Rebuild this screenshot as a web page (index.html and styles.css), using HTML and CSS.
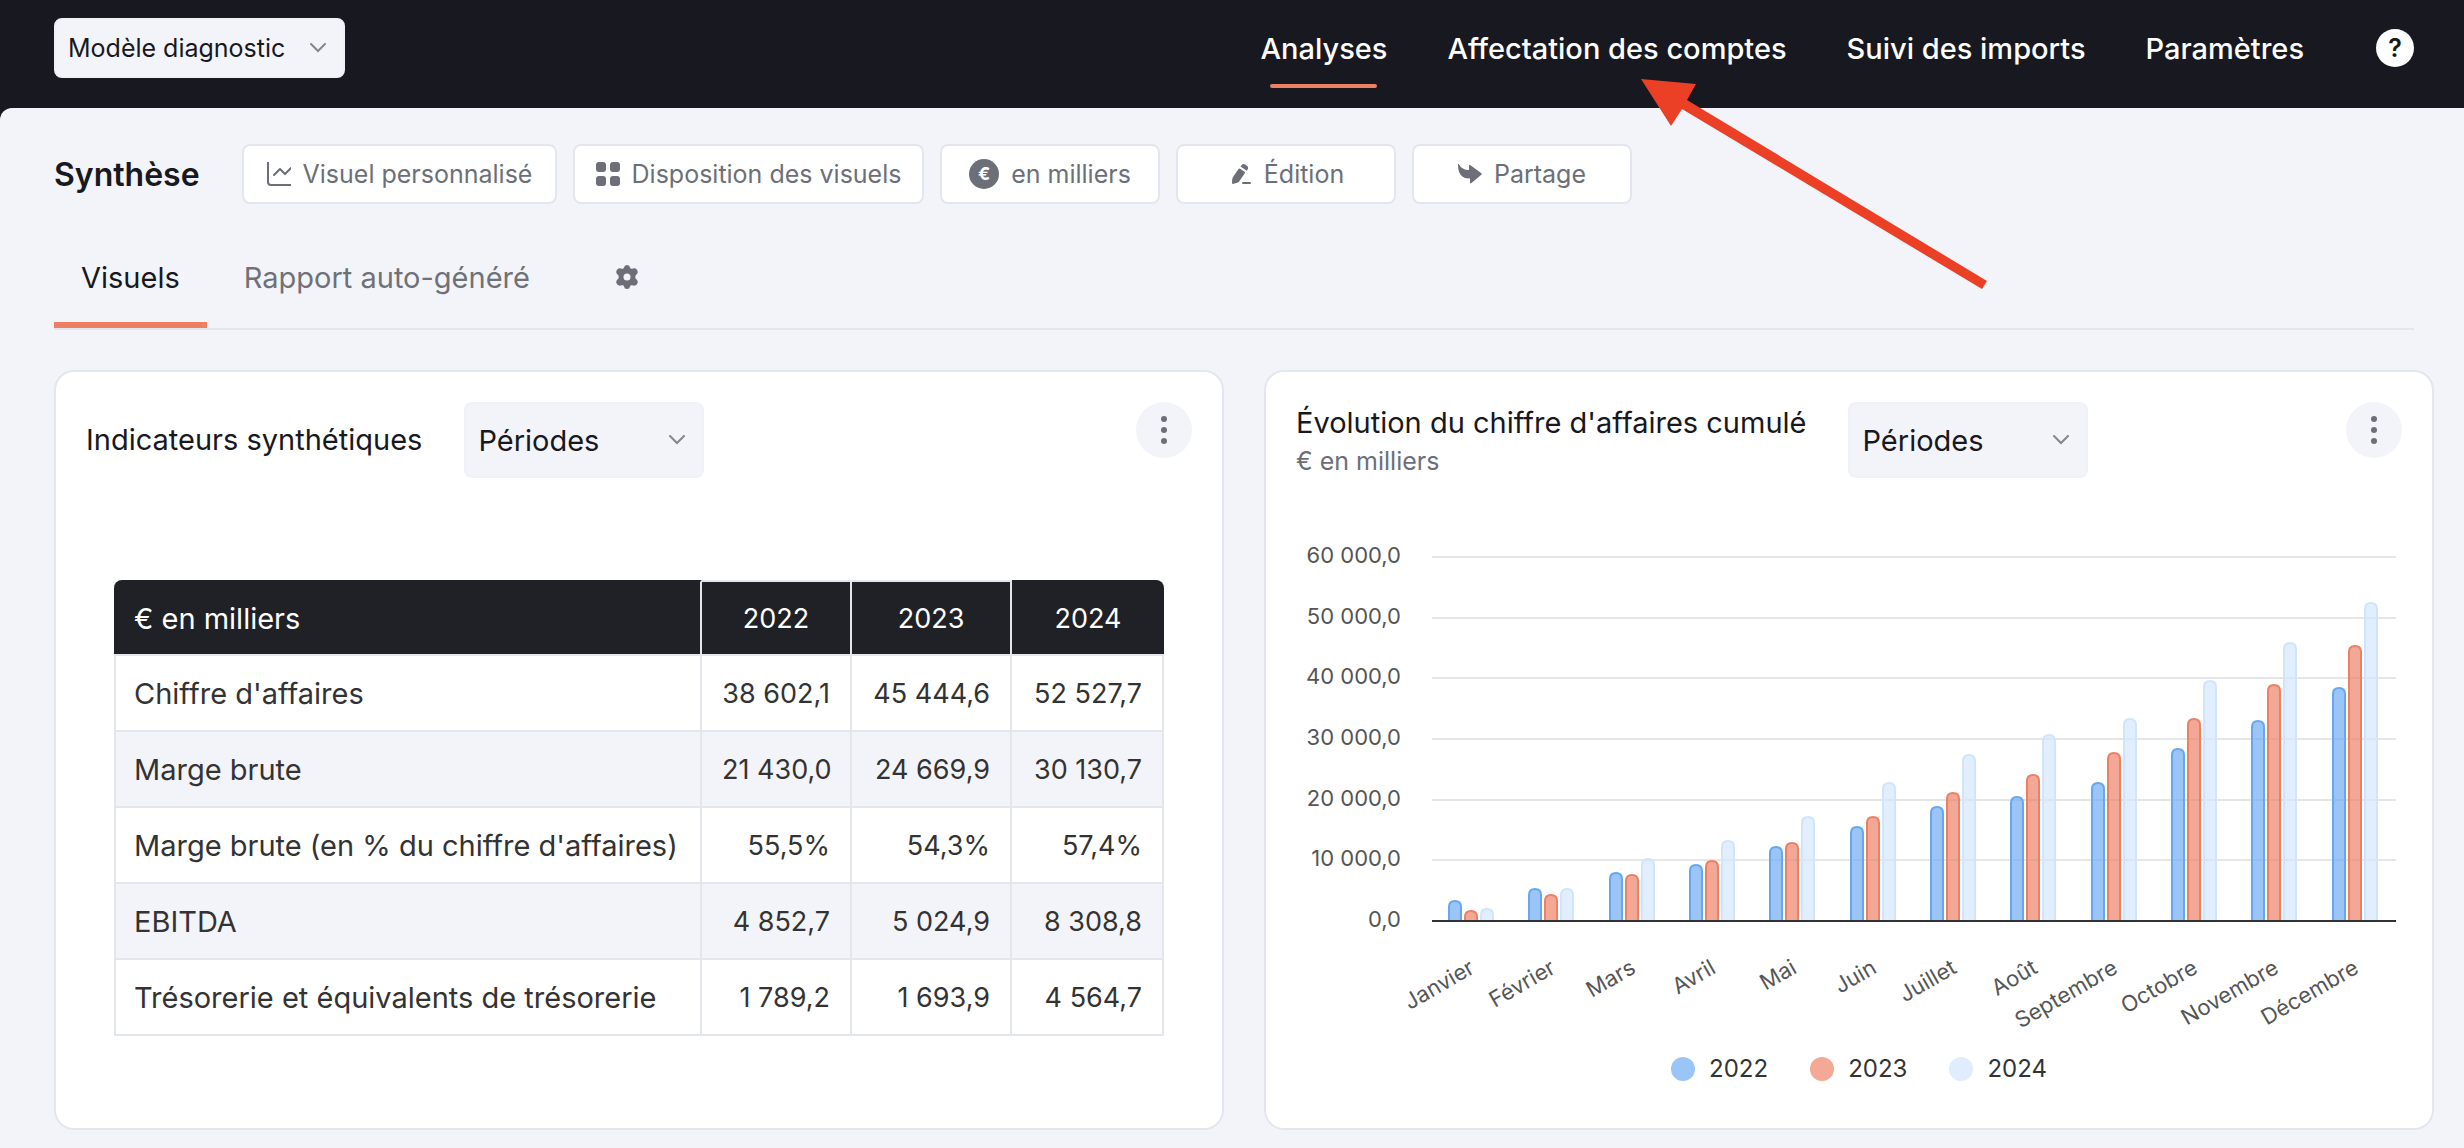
FILE: index.html
```html
<!DOCTYPE html>
<html lang="fr">
<head>
  <meta charset="UTF-8">
  <meta name="viewport" content="width=device-width, initial-scale=1.0">
  <title>Synthèse</title>
  <link rel="stylesheet" href="styles.css">
</head>
<body>
  <header class="topbar">
    <div class="select select-model">
      <select aria-label="Modèle">
        <option>Modèle diagnostic</option>
      </select>
      <svg class="chevron" viewBox="0 0 16 10"><path d="M1 1l7 7 7-7"/></svg>
    </div>
    <nav class="nav">
      <a href="#" class="active">Analyses</a>
      <a href="#">Affectation des comptes</a>
      <a href="#">Suivi des imports</a>
      <a href="#">Paramètres</a>
      <button class="help" aria-label="Aide">?</button>
    </nav>
    <svg class="arrow" viewBox="0 0 350 212">
      <path d="M1 1L56 6 47 22 347 203 342 211 42 31 31 48z"/>
    </svg>
  </header>

  <main class="content">
    <div class="toolbar">
      <h1>Synthèse</h1>
      <button class="tool tool-custom">
        <svg class="icon line" viewBox="0 0 24 24"><path d="M1 0v20q0 3 3 3h20M7 13l6-6 5 5 6-6"/></svg>
        Visuel personnalisé
      </button>
      <button class="tool tool-layout">
        <svg class="icon" viewBox="0 0 24 24">
          <rect width="10" height="10" rx="3"/><rect x="14" width="10" height="10" rx="3"/>
          <rect y="14" width="10" height="10" rx="3"/><rect x="14" y="14" width="10" height="10" rx="3"/>
        </svg>
        Disposition des visuels
      </button>
      <button class="tool"><span class="coin">€</span>en milliers</button>
      <button class="tool">
        <svg class="icon" viewBox="0 0 24 24">
          <path d="M5 22c-1 0-1-1-1-2l.3-3q.1-1 .7-2l5.500-8q.7-1 1.700-.3l4.300 3q1 .6.300 1.600l-5.500 8q-.5.800-1.500 1.300zM12.500 4.500l1-1.300q1.500-2 3.700-.6l1.600 1.100q2.200 1.600.8 3.700l-.8 1.300z"/>
          <rect x="14" y="20" width="9" height="2" rx="1"/>
        </svg>
        Édition
      </button>
      <button class="tool">
        <svg class="icon" viewBox="0 0 24 24"><path d="M0 2.500q0-1.500.8-.3Q4 8 11 8V4q0-2 1.500-.8l10.500 7.800q1.500 1 0 2L13.500 21q-1.500 1.200-1.500-.8v-3.700Q0 17 0 2.500z"/></svg>
        Partage
      </button>
    </div>

    <div class="tabs">
      <a href="#" class="tab active">Visuels</a>
      <a href="#" class="tab">Rapport auto-généré</a>
      <button class="settings" aria-label="Réglages">
        <svg class="icon" viewBox="0 0 24 24">
          <path fill-rule="evenodd" d="M9 2.500Q9.300 0 12 0t3 2.500q.3 1.500 2 1.300 3-1.200 4.800.7 1.900 2.700 0 4.800-1.800 1.200-1.500 2.700-.3 1.500 1.500 2.700 1.900 2.100 0 4.800-1.800 1.900-4.800.7-1.700-.2-2 1.300Q14.700 24 12 24t-3-2.500q-.3-1.500-2-1.300-3 1.200-4.800-.7-1.900-2.700 0-4.800 1.800-1.200 1.500-2.700.3-1.500-1.500-2.700-1.900-2.100 0-4.800Q4 2.600 7 3.800q1.700.2 2-1.300zM12 8.500a3.500 3.500 0 1 0 0 7 3.500 3.500 0 1 0 0-7z"/>
        </svg>
      </button>
    </div>

    <div class="cards">
      <section class="card">
        <div class="card-head">
          <h2>Indicateurs synthétiques</h2>
          <div class="select select-period">
            <select aria-label="Périodes">
              <option>Périodes</option>
            </select>
            <svg class="chevron" viewBox="0 0 16 10"><path d="M1 1l7 7 7-7"/></svg>
          </div>
          <button class="menu" aria-label="Options"><i></i><i></i><i></i></button>
        </div>
        <table>
          <colgroup><col><col class="col-2022"><col class="col-2023"><col class="col-2024"></colgroup>
          <thead>
            <tr><th>€ en milliers</th><th>2022</th><th>2023</th><th>2024</th></tr>
          </thead>
          <tbody>
            <tr><td>Chiffre d'affaires</td><td>38 602,1</td><td>45 444,6</td><td>52 527,7</td></tr>
            <tr><td>Marge brute</td><td>21 430,0</td><td>24 669,9</td><td>30 130,7</td></tr>
            <tr><td>Marge brute (en % du chiffre d'affaires)</td><td>55,5%</td><td>54,3%</td><td>57,4%</td></tr>
            <tr><td>EBITDA</td><td>4 852,7</td><td>5 024,9</td><td>8 308,8</td></tr>
            <tr><td>Trésorerie et équivalents de trésorerie</td><td>1 789,2</td><td>1 693,9</td><td>4 564,7</td></tr>
          </tbody>
        </table>
      </section>

      <section class="card">
        <div class="card-head">
          <div>
            <h2>Évolution du chiffre d'affaires cumulé</h2>
            <p class="unit">€ en milliers</p>
          </div>
          <div class="select select-period">
            <select aria-label="Périodes">
              <option>Périodes</option>
            </select>
            <svg class="chevron" viewBox="0 0 16 10"><path d="M1 1l7 7 7-7"/></svg>
          </div>
          <button class="menu" aria-label="Options"><i></i><i></i><i></i></button>
        </div>
        <svg class="chart" id="chart" viewBox="0 0 1106 520"></svg>
        <ul class="legend">
          <li class="y2022">2022</li>
          <li class="y2023">2023</li>
          <li class="y2024">2024</li>
        </ul>
      </section>
    </div>
  </main>

  <script src="chart.js"></script>
</body>
</html>
```
FILE: styles.css
```css
* {
  box-sizing: border-box;
}

body {
  margin: 0;
  background-color: #181820;
  color: #181820;
  font-family: Inter, sans-serif;
  font-size: 29px;
}

h1, h2, p, ul {
  margin: 0;
  padding: 0;
}

button, select {
  border: none;
  font-family: inherit;
  color: inherit;
  cursor: pointer;
}

a {
  color: inherit;
  text-decoration: none;
}

/* top bar */
.topbar {
  position: relative;
  display: flex;
  justify-content: space-between;
  align-items: flex-start;
  height: 108px;
  padding: 18px 50px 0 54px;
}

.nav {
  display: flex;
  align-items: center;
  gap: 60px;
  height: 60px;
  color: #fff;
  font-weight: 500;
}

.nav a {
  position: relative;
}

.nav .active::after {
  content: "";
  position: absolute;
  left: 10px;
  right: 10px;
  bottom: -22px;
  height: 4px;
  border-radius: 2px;
  background-color: #ee7f63;
}

.help {
  width: 38px;
  height: 38px;
  margin-left: 12px;
  padding: 0;
  border-radius: 50%;
  background-color: #fff;
  color: #181820;
  font-size: 25px;
  font-weight: 600;
}

.arrow {
  position: absolute;
  top: 78px;
  right: 474px;
  width: 350px;
  fill: #ec4026;
  pointer-events: none;
}

/* drop-downs */
.select {
  display: grid;
  align-items: center;
}

.select select {
  grid-area: 1 / 1;
  width: 100%;
  height: 100%;
  padding: 0 12px;
  border: 2px solid #f0f1f8;
  border-radius: 8px;
  background-color: #f3f4fa;
  appearance: none;
}

.select-model {
  width: 291px;
  height: 60px;
}

.select-model select {
  font-size: 25px;
}

.select-period {
  width: 240px;
  height: 76px;
}

.select-period select {
  font-size: 29px;
}

.chevron {
  grid-area: 1 / 1;
  justify-self: end;
  width: 16px;
  margin-right: 19px;
  fill: none;
  stroke: #85868c;
  stroke-width: 2;
  stroke-linecap: round;
  pointer-events: none;
}

/* page */
.content {
  min-height: calc(100vh - 108px);
  padding: 36px 30px 18px 54px;
  border-top-left-radius: 12px;
  background-color: #f3f4fa;
}

.toolbar {
  display: flex;
  align-items: center;
  gap: 16px;
}

h1 {
  width: 172px;
  font-size: 32px;
  font-weight: 600;
}

.tool {
  display: flex;
  align-items: center;
  justify-content: center;
  gap: 12px;
  min-width: 220px;
  height: 60px;
  padding: 0 10px;
  border: 2px solid #e4e6ee;
  border-radius: 8px;
  background-color: #fff;
  color: #6c6f78;
  font-size: 25px;
  white-space: nowrap;
}

.tool-custom {
  min-width: 315px;
}

.tool-layout {
  min-width: 351px;
}

.icon {
  width: 24px;
  height: 24px;
  fill: #6c6f78;
}

.icon.line {
  fill: none;
  stroke: #6c6f78;
  stroke-width: 2;
  stroke-linecap: round;
  stroke-linejoin: round;
}

.coin {
  width: 30px;
  height: 30px;
  border-radius: 50%;
  background-color: #6c6f78;
  color: #fff;
  font-size: 18px;
  font-weight: 700;
  line-height: 30px;
}

.tabs {
  display: flex;
  height: 126px;
  margin-right: 20px;
  padding-top: 22px;
  border-bottom: 2px solid #e4e6ee;
}

.tab {
  padding: 0 27px;
  border-bottom: 6px solid transparent;
  color: #6f7178;
  line-height: 104px;
}

.tab.active {
  border-bottom-color: #ee7f63;
  color: #181820;
}

.tab + .tab {
  padding: 0 37px;
}

.settings {
  display: flex;
  align-items: center;
  margin-left: 48px;
  padding: 0;
  background: none;
}

/* cards */
.cards {
  display: grid;
  grid-template-columns: 1fr 1fr;
  gap: 40px;
  margin-top: 40px;
}

.card {
  min-height: 760px;
  padding: 30px;
  border: 2px solid #e4e6ee;
  border-radius: 20px;
  background-color: #fff;
}

.card-head {
  display: flex;
  align-items: center;
  gap: 42px;
}

h2 {
  font-size: 29px;
  font-weight: 400;
  line-height: 42px;
}

.unit {
  color: #6c6f78;
  font-size: 25px;
  line-height: 34px;
}

.menu {
  display: flex;
  flex-direction: column;
  justify-content: center;
  align-items: center;
  align-self: flex-start;
  gap: 5px;
  width: 56px;
  height: 56px;
  margin-left: auto;
  border-radius: 50%;
  background-color: #f3f4fa;
}

.menu i {
  width: 6px;
  height: 6px;
  border-radius: 50%;
  background-color: #6c6f78;
}

/* table */
table {
  width: calc(100% - 56px);
  margin: 102px 28px 0;
  border-collapse: separate;
  border-spacing: 0;
  table-layout: fixed;
  color: #333;
  font-size: 27px;
}

.col-2022 {
  width: 150px;
}

.col-2023 {
  width: 160px;
}

.col-2024 {
  width: 152px;
}

th, td {
  height: 76px;
  padding: 0 20px;
  border-right: 2px solid #e4e6ee;
  border-bottom: 2px solid #e4e6ee;
  text-align: right;
  white-space: nowrap;
}

th {
  border-top: 2px solid #e4e6ee;
  background-color: #202126;
  color: #fff;
  font-weight: 400;
  text-align: center;
}

th:first-child {
  border-top-color: #202126;
  border-top-left-radius: 8px;
  font-size: 29px;
  text-align: left;
}

th:last-child {
  border-top-color: #202126;
  border-right: none;
  border-top-right-radius: 8px;
}

td:first-child {
  padding-left: 18px;
  border-left: 2px solid #e4e6ee;
  font-size: 29px;
  text-align: left;
}

tbody tr:nth-child(even) {
  background-color: #f3f4fa;
}

/* chart */
.chart {
  display: block;
  width: 100%;
  margin-top: 42px;
  overflow: visible;
}

.grid-line {
  stroke: #e6e6e6;
  stroke-width: 2;
}

.axis-line {
  stroke: #333;
  stroke-width: 2;
}

.axis-text {
  fill: #555;
  font-size: 22px;
  text-anchor: end;
}

.bar {
  stroke-width: 2;
}

.bar-2022 {
  fill: rgba(101, 167, 242, 0.66);
  stroke: #65a7f2;
}

.bar-2023 {
  fill: rgba(238, 127, 99, 0.68);
  stroke: #ee7f63;
}

.bar-2024 {
  fill: rgba(208, 229, 253, 0.66);
  stroke: #d0e5fd;
}

.legend {
  display: flex;
  justify-content: center;
  gap: 42px;
  margin-top: 14px;
  padding-left: 20px;
  color: #333;
  font-size: 24px;
  list-style: none;
}

.legend li {
  display: flex;
  align-items: center;
  gap: 14px;
}

.legend li::before {
  content: "";
  width: 24px;
  height: 24px;
  border-radius: 50%;
}

.y2022::before {
  background-color: #9ac5f7;
}

.y2023::before {
  background-color: #f3a995;
}

.y2024::before {
  background-color: #e0edfe;
}
```
FILE: chart.js
```js
const months = ['Janvier', 'Février', 'Mars', 'Avril', 'Mai', 'Juin', 'Juillet', 'Août', 'Septembre', 'Octobre', 'Novembre', 'Décembre'];

const series = {
  2022: [3400, 5400, 8000, 9400, 12400, 15700, 19000, 20600, 22900, 28500, 33200, 38602],
  2023: [1800, 4400, 7700, 10000, 13000, 17300, 21300, 24300, 27900, 33500, 39100, 45444],
  2024: [2100, 5400, 10400, 13300, 17300, 22900, 27500, 30900, 33500, 39800, 46000, 52527]
};

const left = 136;
const right = 1100;
const top0 = 37;
const bottom = 401;
const max = 60000;
const band = (right - left) / months.length;

function y(value) {
  return bottom - (bottom - top0) * value / max;
}

let out = '';

// grid and y axis
for (let v = 0; v <= max; v += 10000) {
  const label = v === 0 ? '0,0' : v / 1000 + ' 000,0';
  if (v > 0) {
    out += `<line class="grid-line" x1="${left}" x2="${right}" y1="${Math.round(y(v))}" y2="${Math.round(y(v))}"/>`;
  }
  out += `<text class="axis-text" x="105" y="${Math.round(y(v)) + 6}">${label}</text>`;
}

// bars, three per month
months.forEach((month, i) => {
  const start = Math.round(left + band * i + 17);
  Object.keys(series).forEach((year, j) => {
    const x = start + j * 16;
    const t = Math.round(y(series[year][i])) + 1;
    out += `<path class="bar bar-${year}" d="M${x} ${bottom}V${t + 6}q0-6 6-6t6 6V${bottom}"/>`;
  });
  const cx = Math.round(left + band * (i + 0.5)) + 4;
  out += `<text class="axis-text" transform="translate(${cx} 452) rotate(-30)">${month}</text>`;
});

out += `<line class="axis-line" x1="${left}" x2="${right}" y1="${bottom}" y2="${bottom}"/>`;

document.getElementById('chart').innerHTML = out;
```
